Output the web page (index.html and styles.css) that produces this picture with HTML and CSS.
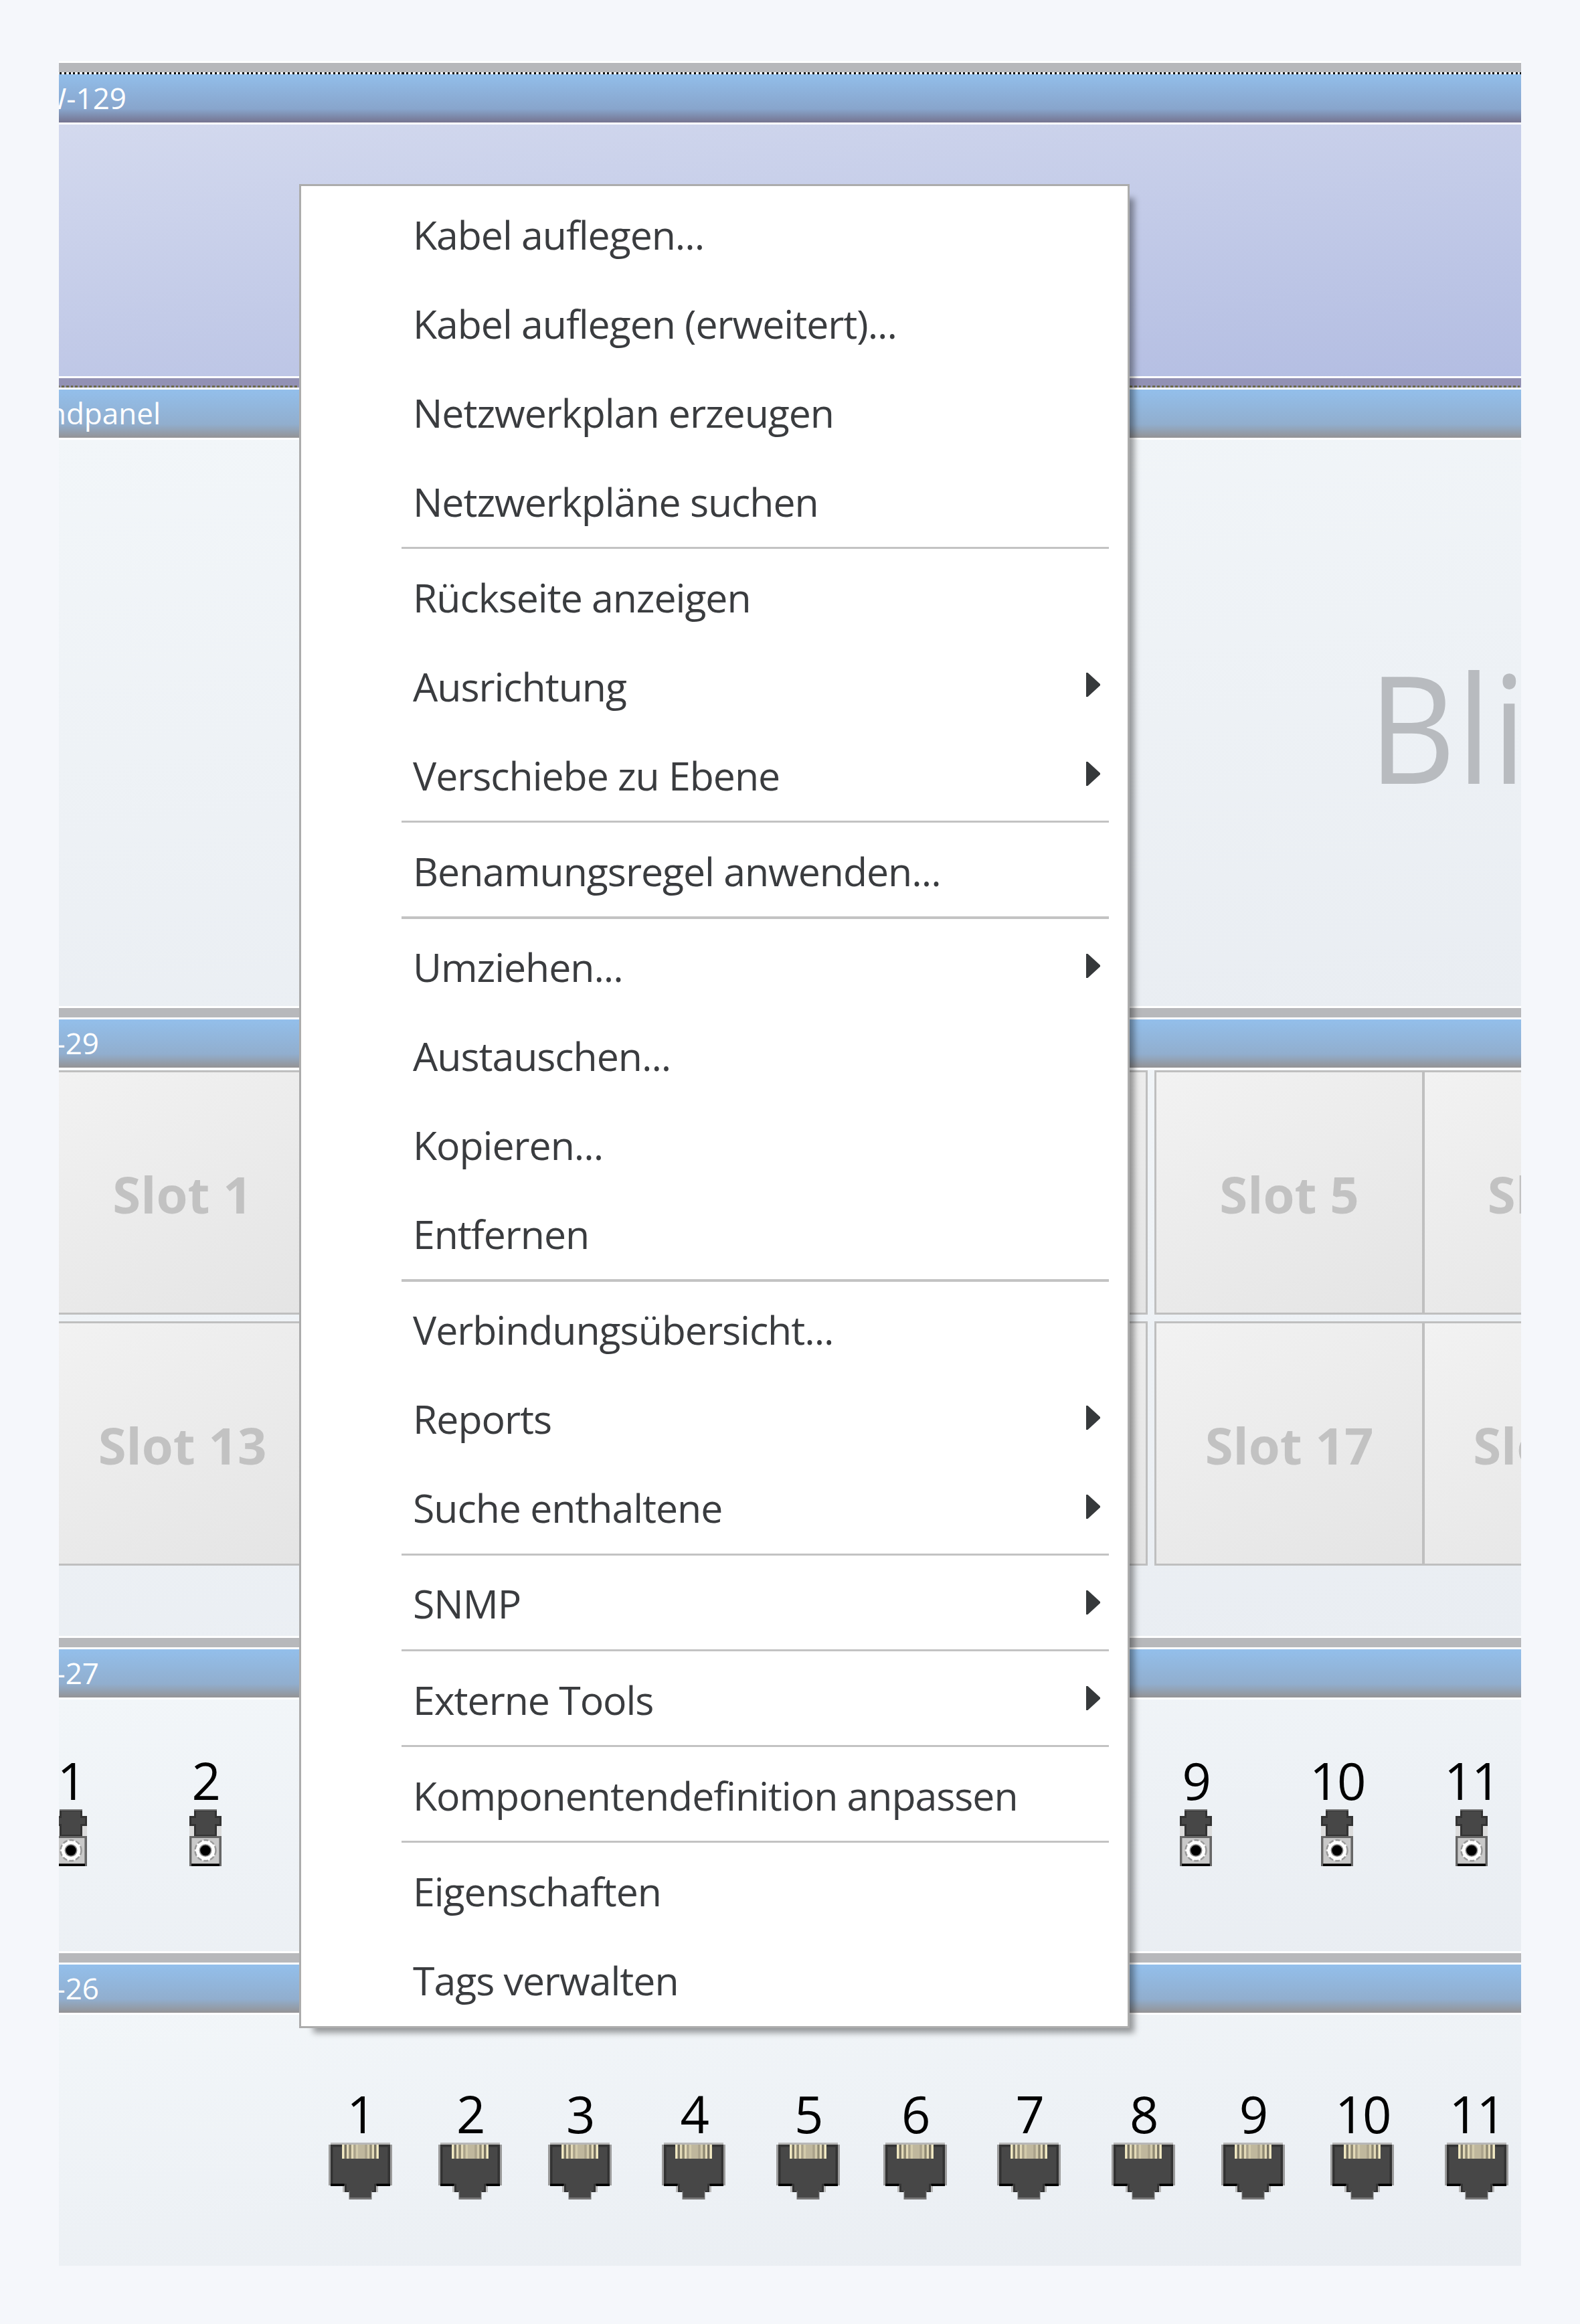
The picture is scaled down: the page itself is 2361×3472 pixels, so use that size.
FILE: index.html
```html
<!DOCTYPE html>
<html lang="de">
<head>
  <meta charset="UTF-8">
  <meta name="viewport" content="width=device-width, initial-scale=1">
  <title>Rackansicht</title>
  <link rel="stylesheet" href="styles.css">
</head>
<body>

  <!-- Shared port icons -->
  <svg class="defs" width="0" height="0">
    <symbol id="fiber" viewBox="0 0 48 85">
      <path fill="#dcdcdc" d="M0 24h48v16H0z"/>
      <path fill="#333" d="M7 1h34v9h7v15h-7v15H7V25H0V10h7z"/>
      <path fill="#777" d="M7 0h34v2H7z"/>
      <path fill="#474747" d="M10 3h28v10h7v9h-7v16H10V22H3v-9h7z"/>
      <path fill="#666" d="M0 40h48v45H0z"/>
      <path fill="#c9c9c9" d="M3.4 43h41v38h-41z"/>
      <path fill="#000" d="M3 81.5h42V85H3z"/>
      <circle cx="24" cy="61.5" r="15.5" fill="#fff" stroke="#999" stroke-width="2.5" stroke-dasharray="7 3"/>
      <circle cx="24" cy="61.5" r="9.5" fill="#8a8a8a"/>
      <circle cx="24" cy="61.5" r="7.8" fill="#000"/>
    </symbol>
    <symbol id="rj45" viewBox="0 0 95 85">
      <path fill="#b8b8b8" d="M3 0h89v4H3z"/>
      <path fill="#9b9b9b" d="M0 3h95v61H0z"/>
      <path fill="#b8b8b8" d="M21 64h53v10H21z"/>
      <path fill="#333" d="M3 3h89v61H3zM24 64h47v10H24z"/>
      <path fill="#474747" d="M6.5 6.5h82v55h-82zM27 61h41v11H27z"/>
      <path fill="#000" d="M3 61.5h20.500v3.400H3zM71.500 61.500H92v3.400H71.500z"/>
      <path fill="#777" d="M30.500 72h34v13h-34z"/>
      <path fill="#474747" d="M31.500 68h32v14h-32z"/>
      <path fill="#bfb79d" d="M20.200 3h54.600v21H20.200z"/>
      <path fill="#f3ebc4" d="M20.200 3h3.400v21h-3.400zM71.400 3h3.400v21h-3.400z"/>
      <path fill="#777262" d="M23.600 3H27v21h-3.400zM68 3h3.400v21H68z"/>
      <path fill="#e3dab8" d="M27 3h3.400v21H27zM33.900 3h3.400v21h-3.400zM64.600 3H68v21h-3.400z"/>
      <path fill="#8f8973" d="M30.400 3h3.500v21h-3.500zM61.200 3h3.400v21h-3.400z"/>
      <path fill="#aaa28b" d="M37.300 3h3.400v21h-3.400zM54.300 3h3.500v21h-3.500z"/>
      <path fill="#d2caab" d="M40.700 3h3.400v21h-3.400zM57.800 3h3.400v21h-3.400z"/>
    </symbol>
    <symbol id="arrow" viewBox="0 0 21 36">
      <path fill="#36393b" d="M0 0h2.500L21 17v2L2.500 36H0z"/>
    </symbol>
  </svg>

  <div class="rack">

    <section class="unit selected">
      <div class="rail"></div>
      <header class="unit-header"><span class="unit-name">W-129</span></header>
      <div class="unit-body"></div>
    </section>

    <section class="unit tall below-selected">
      <div class="rail"></div>
      <header class="unit-header"><span class="unit-name name-long">ndpanel</span></header>
      <div class="unit-body blind"><span class="blind-label">Bli</span></div>
    </section>

    <section class="unit tall">
      <div class="rail"></div>
      <header class="unit-header"><span class="unit-name name-short">-29</span></header>
      <div class="unit-body slots">
        <div class="slot">Slot 1</div>
        <div class="slot"></div>
        <div class="slot"></div>
        <div class="slot"></div>
        <div class="slot">Slot 5</div>
        <div class="slot joined">Slot 6</div>
        <div class="slot">Slot 13</div>
        <div class="slot"></div>
        <div class="slot"></div>
        <div class="slot"></div>
        <div class="slot">Slot 17</div>
        <div class="slot joined">Slot 18</div>
      </div>
    </section>

    <section class="unit">
      <div class="rail"></div>
      <header class="unit-header"><span class="unit-name name-short">-27</span></header>
      <div class="unit-body ports fiber-ports">
        <div class="port">1<svg class="fiber"><use href="#fiber"/></svg></div>
        <div class="port">2<svg class="fiber"><use href="#fiber"/></svg></div>
        <div class="port port-9">9<svg class="fiber"><use href="#fiber"/></svg></div>
        <div class="port port-10">10<svg class="fiber"><use href="#fiber"/></svg></div>
        <div class="port">11<svg class="fiber"><use href="#fiber"/></svg></div>
      </div>
    </section>

    <section class="unit">
      <div class="rail"></div>
      <header class="unit-header"><span class="unit-name name-short">-26</span></header>
      <div class="unit-body ports rj-ports">
        <div class="port">1<svg class="rj45"><use href="#rj45"/></svg></div>
        <div class="port">2<svg class="rj45"><use href="#rj45"/></svg></div>
        <div class="port">3<svg class="rj45"><use href="#rj45"/></svg></div>
        <div class="port wide">4<svg class="rj45"><use href="#rj45"/></svg></div>
        <div class="port wide">5<svg class="rj45"><use href="#rj45"/></svg></div>
        <div class="port tight">6<svg class="rj45"><use href="#rj45"/></svg></div>
        <div class="port wide">7<svg class="rj45"><use href="#rj45"/></svg></div>
        <div class="port wide">8<svg class="rj45"><use href="#rj45"/></svg></div>
        <div class="port">9<svg class="rj45"><use href="#rj45"/></svg></div>
        <div class="port">10<svg class="rj45"><use href="#rj45"/></svg></div>
        <div class="port wide">11<svg class="rj45"><use href="#rj45"/></svg></div>
      </div>
    </section>

  </div>

  <!-- Context menu -->
  <ul class="menu">
    <li class="item">Kabel auflegen...</li>
    <li class="item">Kabel auflegen (erweitert)...</li>
    <li class="item">Netzwerkplan erzeugen</li>
    <li class="item">Netzwerkpläne suchen</li>
    <li class="separator"></li>
    <li class="item">Rückseite anzeigen</li>
    <li class="item">Ausrichtung<svg class="arrow"><use href="#arrow"/></svg></li>
    <li class="item">Verschiebe zu Ebene<svg class="arrow"><use href="#arrow"/></svg></li>
    <li class="separator"></li>
    <li class="item">Benamungsregel anwenden...</li>
    <li class="separator"></li>
    <li class="item">Umziehen...<svg class="arrow"><use href="#arrow"/></svg></li>
    <li class="item">Austauschen...</li>
    <li class="item">Kopieren...</li>
    <li class="item">Entfernen</li>
    <li class="separator"></li>
    <li class="item">Verbindungsübersicht...</li>
    <li class="item">Reports<svg class="arrow"><use href="#arrow"/></svg></li>
    <li class="item">Suche enthaltene<svg class="arrow"><use href="#arrow"/></svg></li>
    <li class="separator"></li>
    <li class="item">SNMP<svg class="arrow"><use href="#arrow"/></svg></li>
    <li class="separator"></li>
    <li class="item">Externe Tools<svg class="arrow"><use href="#arrow"/></svg></li>
    <li class="separator"></li>
    <li class="item">Komponentendefinition anpassen</li>
    <li class="separator"></li>
    <li class="item">Eigenschaften</li>
    <li class="item">Tags verwalten</li>
  </ul>

</body>
</html>
```
FILE: styles.css
```css
* {
  box-sizing: border-box;
}

body {
  margin: 0;
  padding: 91px 88px 87px;
  position: relative;
  height: 3472px;
  background: #f5f7fb;
  font-family: "Open Sans", "Noto Sans", sans-serif;
  overflow: hidden;
}

.defs {
  position: absolute;
}

/* Rack */
.rack {
  display: flex;
  flex-direction: column;
  width: 2185px;
  height: 3294px;
  overflow: hidden;
}

.unit {
  display: flex;
  flex-direction: column;
  height: 470.6px;
  flex-shrink: 0;
}

.unit.tall {
  height: 941.2px;
}

/* Grey strip between two units */
.rail {
  height: 20px;
  flex-shrink: 0;
  border: solid #fff;
  border-width: 3.4px 0;
  background: #b7b8bb;
}

/* Dotted focus frame round the selected unit */
.selected .rail {
  border-bottom: 0;
  background:
    repeating-linear-gradient(90deg, #fff 0 1px, #000 1px 4px, #fff 4px 6.82px) 0 100% / 100% 3px no-repeat,
    #b7b8bb;
}

.below-selected .rail {
  background:
    repeating-linear-gradient(90deg, #6b6a4c 0 1px, #9291b4 1px 4px, #6b6a4c 4px 6.82px) 0 100% / 100% 3px no-repeat,
    #9291b4;
}

.unit-header {
  display: flex;
  height: 75px;
  flex-shrink: 0;
  border-bottom: 3px solid #fff;
  background: linear-gradient(#93bfeb, #91aece 72%, #949395);
}

.selected .unit-header {
  background: linear-gradient(#92beea, #88a5cc 72%, #757490);
}

/* Names run out of view on the left */
.unit-name {
  display: flex;
  justify-content: flex-end;
  width: 101px;
  color: #fff;
  font-size: 44px;
  line-height: 70px;
  white-space: nowrap;
}

.name-long {
  width: 152px;
}

.name-short {
  width: 60px;
}

.unit-body {
  flex: 1;
  min-height: 0;
  background: linear-gradient(174deg, #f2f6f9, #e9edf2);
}

.selected .unit-body {
  background: linear-gradient(174deg, #d3d9ee, #b3bde2);
}

/* Blind panel */
.blind {
  padding: 275px 0 0 1957px;
}

.blind-label {
  display: block;
  width: 228px;
  color: #b8bbbf;
  font-size: 224px;
  letter-spacing: 2px;
  line-height: 305px;
  transform: scaleX(0.9);
  transform-origin: 0 0;
}

/* Slots */
.slots {
  display: grid;
  grid-template-columns: repeat(6, 403px);
  grid-template-rows: 365px 365px;
  gap: 10px 10.5px;
  padding-top: 1px;
}

.slot {
  display: flex;
  align-items: center;
  justify-content: center;
  margin: 0 17px 0 -17px;
  width: 403px;
  padding-top: 5px;
  border: 3px solid #bfbfbf;
  background: linear-gradient(150deg, #f2f2f2, #e4e4e4);
  color: #c2c2c2;
  font-size: 76px;
  font-weight: bold;
}

.slot.joined {
  margin-left: -30px;
}

/* Ports */
.ports {
  display: flex;
  align-items: flex-start;
}

.port {
  display: flex;
  flex-direction: column;
  align-items: center;
  flex-shrink: 0;
  gap: 5px;
  width: 160px;
  color: #000;
  font-size: 76px;
  letter-spacing: -2.5px;
  line-height: 76px;
}

.fiber-ports {
  padding-top: 83px;
}

.fiber-ports .port {
  margin-left: 41px;
}

.fiber-ports .port:first-child {
  margin-left: -62px;
}

.fiber-ports .port-9 {
  margin-left: 1320px;
}

.fiber-ports .port-10 {
  margin-left: 51px;
}

.rj-ports {
  padding: 110px 0 0 367px;
}

.rj-ports .port {
  margin-left: 3.8px;
}

.rj-ports .wide {
  margin-left: 10.5px;
}

.rj-ports .tight {
  margin-left: 0;
}

.fiber {
  width: 48px;
  height: 85px;
}

.rj45 {
  width: 95px;
  height: 85px;
}

/* Context menu */
.menu {
  position: absolute;
  left: 447px;
  top: 275px;
  width: 1241px;
  height: 2755px;
  margin: 0;
  padding: 3.5px 0;
  list-style: none;
  background: #fff;
  border: 3px solid #acacac;
  box-shadow: 14px 14px 9px -7px rgba(0, 0, 0, 0.38);
}

.item {
  display: flex;
  justify-content: space-between;
  height: 133px;
  padding: 0 41px 0 167px;
  color: #3a3c3f;
  font-size: 59px;
  letter-spacing: -1.05px;
  line-height: 137px;
  white-space: nowrap;
}

.separator {
  height: 3.4px;
  margin: 3.4px 28px 3.4px 150px;
  background: #c3c3c3;
}

.arrow {
  align-self: center;
  width: 21px;
  height: 36px;
}
```
